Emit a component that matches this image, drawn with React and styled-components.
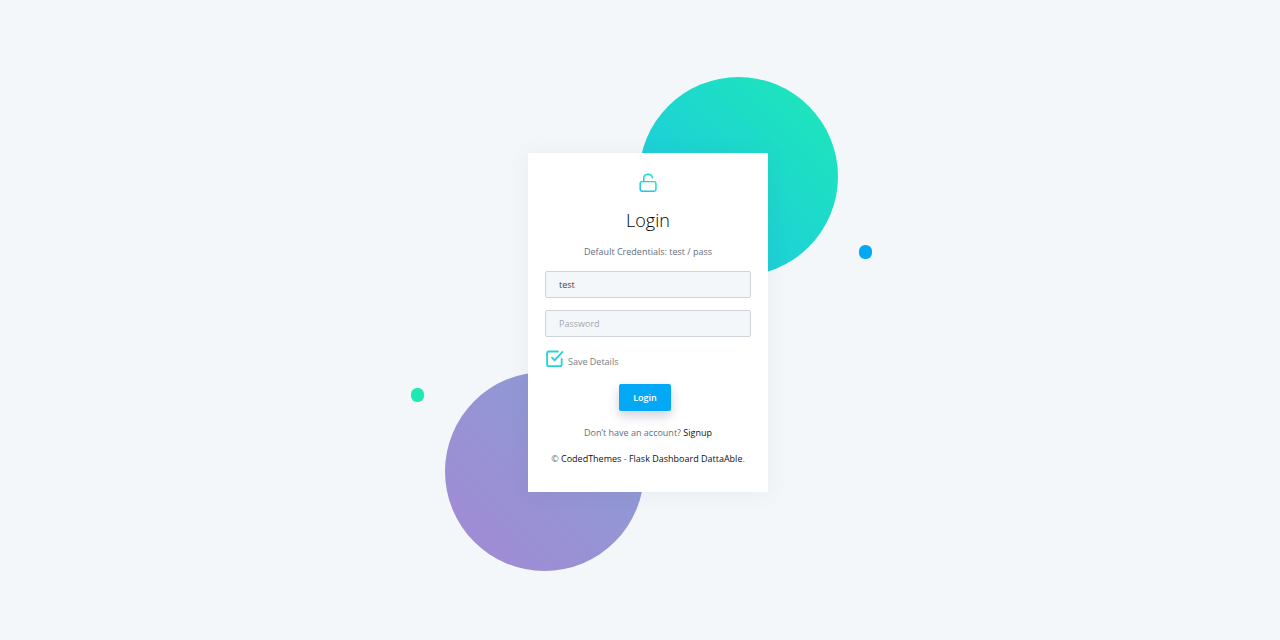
import React, { useState } from "react";
import styled, { createGlobalStyle } from "styled-components";

const GlobalStyle = createGlobalStyle`
  *, *::before, *::after { box-sizing: border-box; }
  body {
    margin: 0;
    background: #f4f7fa;
    color: #676d79;
    font-family: "Open Sans", "Noto Sans", sans-serif;
    font-size: 9px;
    line-height: 14px;
  }
`;

const Page = styled.main`
  min-height: 100vh;
  display: flex;
  align-items: center;
  justify-content: center;
  padding: 5px 0 0 16px;
  overflow: hidden;
`;

const Content = styled.div`
  position: relative;
  width: 240px;
`;

const Bubble = styled.span`
  position: absolute;
  width: 199px;
  height: 199px;
  border-radius: 50%;
`;

const TealBubble = styled(Bubble)`
  top: -76px;
  right: -70px;
  background: linear-gradient(-135deg, #1de9b6 0%, #1dc4e9 100%);
`;

const VioletBubble = styled(Bubble)`
  bottom: -79px;
  left: -83px;
  background: linear-gradient(-135deg, #899fd4 0%, #a389d4 100%);
`;

const Dot = styled(Bubble)`
  width: 13px;
  height: 14px;
  border-radius: 6px;
`;

const BlueDot = styled(Dot)`
  top: 92px;
  right: -104px;
  background: #04a9f5;
`;

const GreenDot = styled(Dot)`
  bottom: 90px;
  left: -117px;
  background: #1de9b6;
`;

const Card = styled.form`
  position: relative;
  display: flex;
  flex-direction: column;
  align-items: center;
  padding: 19px 17px 14px;
  background: #fff;
  box-shadow: 0 1px 20px 0 rgba(69, 90, 100, 0.08);
`;

const Icon = styled.svg`
  display: block;
  flex: none;
  fill: none;
  stroke-linecap: round;
  stroke-linejoin: round;
`;

const Title = styled.h1`
  margin: 15px 0 13px;
  color: #000;
  font-size: 18px;
  line-height: 24px;
  font-weight: 300;
`;

const Text = styled.p`
  margin: 0 0 12px;
  white-space: nowrap;
`;

const Field = styled.input`
  width: 100%;
  height: 27px;
  margin: 0 0 12px;
  padding: 0 13px;
  border: 1px solid #ced4da;
  border-radius: 2px;
  background: #f4f7fa;
  color: #3f4654;
  font: inherit;
  outline: none;

  &::placeholder { color: #a3a8ae; opacity: 1; }
  &:focus { border-color: #04a9f5; }
`;

const SaveLabel = styled.label`
  position: relative;
  align-self: flex-start;
  display: flex;
  align-items: center;
  gap: 3px;
  height: 20px;
  margin-bottom: 15px;
  color: #7d7d7d;
  cursor: pointer;
`;

const SaveText = styled.span`
  padding-top: 5px;
`;

const HiddenCheckbox = styled.input`
  position: absolute;
  inset: 0 auto auto 0;
  width: 20px;
  height: 20px;
  margin: 0;
  opacity: 0;
  cursor: pointer;
`;

const Submit = styled.button`
  height: 27px;
  margin: 0 6px 15px 0;
  padding: 0 14px;
  border: 0;
  border-radius: 2px;
  background: #04a9f5;
  color: #fff;
  font: inherit;
  font-weight: 600;
  box-shadow: 0 5px 11px rgba(50, 50, 93, 0.23);
  cursor: pointer;
`;

const Link = styled.a`
  color: #111;
  font-weight: 500;
  text-decoration: none;
`;

export default function App() {
  const [user, setUser] = useState("test");
  const [password, setPassword] = useState("");
  const [save, setSave] = useState(true);

  return (
    <>
      <GlobalStyle />
      <Page>
        <Content>
          <TealBubble />
          <VioletBubble />
          <BlueDot />
          <GreenDot />
          <Card onSubmit={(e) => e.preventDefault()}>
            <Icon width="21" height="21" viewBox="0 0 24 24" stroke="url(#lock)" strokeWidth="1.7" aria-hidden="true">
              <defs>
                <linearGradient id="lock" gradientUnits="userSpaceOnUse" x1="20" y1="2" x2="6" y2="22">
                  <stop offset="0" stopColor="#1de9b6" />
                  <stop offset="1" stopColor="#1dc4e9" />
                </linearGradient>
              </defs>
              <rect x="2.5" y="11" width="18" height="11" rx="2" />
              <path d="M6.5 11V7.5a5 5 0 0 1 9.9-1" />
            </Icon>
            <Title>Login</Title>
            <Text>Default Credentials: test / pass</Text>
            <Field type="text" aria-label="Username" placeholder="Username" value={user} onChange={(e) => setUser(e.target.value)} />
            <Field type="password" aria-label="Password" placeholder="Password" value={password} onChange={(e) => setPassword(e.target.value)} />
            <SaveLabel>
              <HiddenCheckbox type="checkbox" checked={save} onChange={(e) => setSave(e.target.checked)} />
              <Icon width="20" height="20" viewBox="0 0 24 24" stroke="#23d7d5" strokeWidth="2.2" aria-hidden="true">
                {save && <path d="M8.5 10.5l3 3L21 3.5" />}
                <path d="M20 12v6.500a2 2 0 0 1-2 2H4.500a2 2 0 0 1-2-2V5a2 2 0 0 1 2-2h11" />
              </Icon>
              <SaveText>Save Details</SaveText>
            </SaveLabel>
            <Submit type="submit">Login</Submit>
            <Text>
              Don’t have an account? <Link href="#signup">Signup</Link>
            </Text>
            <Text>
              © <Link href="#codedthemes">CodedThemes</Link> - <Link href="#datta-able">Flask Dashboard DattaAble</Link>.
            </Text>
          </Card>
        </Content>
      </Page>
    </>
  );
}
